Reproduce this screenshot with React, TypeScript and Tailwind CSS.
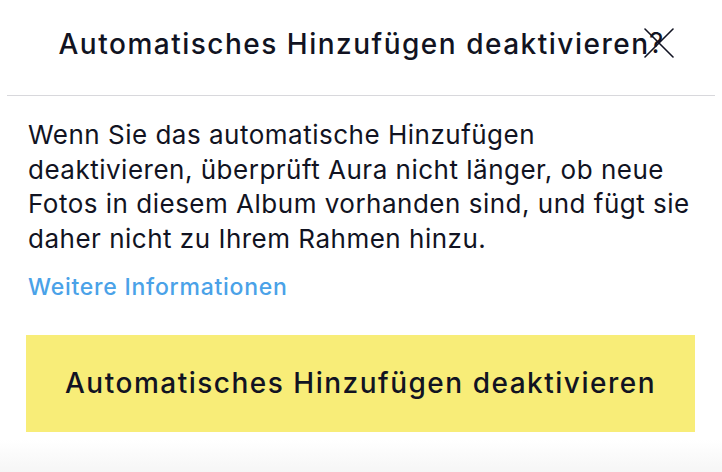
export default function App() {
  return (
    <div className="w-[722px] h-[472px] bg-white flex flex-col font-['Inter','Noto_Sans',sans-serif] text-[#111322] overflow-hidden">
      <div className="h-[95px] relative flex items-center justify-center pb-[8px]">
        <h1 className="text-[28px] font-medium tracking-[1.5px] ml-[-14px] whitespace-nowrap">Automatisches Hinzufügen deaktivieren</h1>
        <div className="absolute left-[644px] top-[28px] w-[30px] h-[30px]">
          <span className="absolute left-[5px] top-[1px] text-[28px] font-normal leading-none">?</span>
          <svg className="absolute inset-0" width="30" height="30" viewBox="0 0 30 30" fill="none" stroke="#111322" strokeWidth="1.6" strokeLinecap="round">
            <path d="M1 1L29 29M29 1L1 29" />
          </svg>
        </div>
      </div>
      <div className="mx-[7px] h-px bg-[#d8d8dc]" />
      <div className="px-[28px] pt-[22px]">
        <p className="text-[26px] leading-[34.5px] tracking-[0.5px] whitespace-nowrap">
          Wenn Sie das automatische Hinzufügen
          <br />
          deaktivieren, überprüft Aura nicht länger, ob neue
          <br />
          Fotos in diesem Album vorhanden sind, und fügt sie
          <br />
          daher nicht zu Ihrem Rahmen hinzu.
        </p>
        <a className="block mt-[14px] text-[23px] font-medium tracking-[0.75px] text-[#4aa2e8]">Weitere Informationen</a>
      </div>
      <div className="ml-[26px] mr-[27px] mt-[30px] h-[97px] bg-[#f8ed78] flex items-center justify-center">
        <span className="text-[28px] font-medium tracking-[1.5px] whitespace-nowrap">Automatisches Hinzufügen deaktivieren</span>
      </div>
      <div className="flex-1 mt-[8px] bg-gradient-to-b from-white to-[#f6f6f6]" />
    </div>
  );
}
